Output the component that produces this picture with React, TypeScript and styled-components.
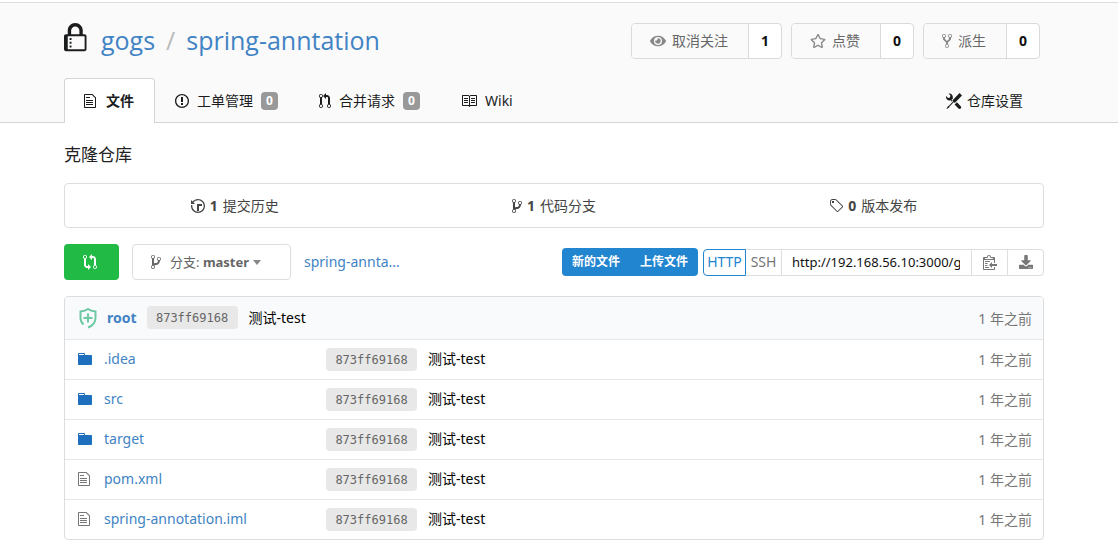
import React from "react";
import styled, { createGlobalStyle, css } from "styled-components";
import { FaEye, FaRegStar, FaDownload } from "react-icons/fa";

const GlobalStyle = createGlobalStyle`
  *, *::before, *::after { box-sizing: border-box; }
  body {
    margin: 0;
    background: #fff;
    color: #000;
    font: 14px/20px "Noto Sans", "Noto Sans CJK SC", sans-serif;
  }
  a { color: #4183c4; text-decoration: none; }
  button, input { font: inherit; margin: 0; }
  button { cursor: pointer; }
`;

const paths = {
  lock: [12, "M4 13H3v-1h1v1zm8-6v7c0 .55-.45 1-1 1H1c-.55 0-1-.45-1-1V7c0-.55.45-1 1-1h1V4c0-2.2 1.8-4 4-4s4 1.8 4 4v2h1c.55 0 1 .45 1 1zM3.8 6h4.41V4c0-1.22-.98-2.2-2.2-2.2-1.22 0-2.2.98-2.2 2.2v2H3.8zM11 7H2v7h9V7zM4 8H3v1h1V8zm0 2H3v1h1v-1z"],
  file: [12, "M6 5H2V4h4v1zM2 8h7V7H2v1zm0 2h7V9H2v1zm0 2h7v-1H2v1zm10-7.5V14c0 .55-.45 1-1 1H1c-.55 0-1-.45-1-1V2c0-.55.45-1 1-1h7.5L12 4.5zM11 5L8 2H1v12h10V5z"],
  issue: [14, "M7 2.3c3.14 0 5.7 2.56 5.7 5.7s-2.56 5.7-5.7 5.7A5.71 5.71 0 0 1 1.3 8c0-3.14 2.56-5.7 5.7-5.7zM7 1C3.14 1 0 4.14 0 8s3.14 7 7 7 7-3.14 7-7-3.14-7-7-7zm1 3H6v5h2V4zm0 6H6v2h2v-2z"],
  pull: [12, "M11 11.28V5c-.03-.78-.34-1.47-.94-2.06C9.46 2.35 8.78 2.03 8 2H7V0L4 3l3 3V4h1c.27.02.48.11.69.31.21.2.3.42.31.69v6.28A1.993 1.993 0 0 0 10 15a1.993 1.993 0 0 0 1-3.72zm-1 2.92c-.66 0-1.2-.55-1.2-1.2 0-.65.55-1.2 1.2-1.2.65 0 1.2.55 1.2 1.2 0 .65-.55 1.2-1.2 1.2zM4 3c0-1.11-.89-2-2-2a1.993 1.993 0 0 0-1 3.72v6.56A1.993 1.993 0 0 0 2 15a1.993 1.993 0 0 0 1-3.72V4.72c.59-.34 1-.98 1-1.72zm-.8 10c0 .66-.55 1.2-1.2 1.2-.65 0-1.2-.55-1.2-1.2 0-.65.55-1.2 1.2-1.2.65 0 1.2.55 1.2 1.2zM2 4.2C1.34 4.2.8 3.65.8 3c0-.65.55-1.2 1.2-1.2.65 0 1.2.55 1.2 1.2 0 .65-.55 1.2-1.2 1.2z"],
  book: [16, "M3 5h4v1H3V5zm0 3h4V7H3v1zm0 2h4V9H3v1zm11-5h-4v1h4V5zm0 2h-4v1h4V7zm0 2h-4v1h4V9zm2-6v9c0 .55-.45 1-1 1H9.5l-1 1-1-1H2c-.55 0-1-.45-1-1V3c0-.55.45-1 1-1h5.5l1 1 1-1H15c.55 0 1 .45 1 1zm-8 .5L7.5 3H2v9h6V3.5zm7-.5H9.5l-.5.5V12h6V3z"],
  tools: [16, "M4.48 7.27c.26.26 1.28 1.33 1.28 1.33l.56-.58-.88-.91 1.69-1.8s-.76-.74-.43-.45c.32-1.19.03-2.51-.87-3.44C4.93.5 3.66.2 2.52.51l1.93 2-.51 1.96-1.89.52-1.93-1.99C-.19 4.17.1 5.48 1 6.4c.94.98 2.29 1.26 3.48.87zm6.44 1.94l-2.33 2.3 3.84 3.98c.31.33.73.49 1.14.49.41 0 .82-.16 1.14-.49.63-.65.63-1.7 0-2.35l-3.79-3.93zM16 2.53L13.55 0 6.33 7.46l.88.91-4.31 4.46-.99.53-1.39 2.27.35.37 2.2-1.44.51-1.02L7.9 9.08l.88.91L16 2.53z"],
  history: [14, "M8 13H6V6h5v2H8v5zM7 1C4.81 1 2.87 2.02 1.59 3.59L0 2v4h4L2.5 4.5C3.55 3.17 5.17 2.3 7 2.3c3.14 0 5.7 2.56 5.7 5.7s-2.56 5.7-5.7 5.7A5.71 5.71 0 0 1 1.3 8c0-.34.03-.67.09-1H.08C.03 7.33 0 7.66 0 8c0 3.86 3.14 7 7 7s7-3.14 7-7-3.14-7-7-7z"],
  branch: [10, "M10 5c0-1.11-.89-2-2-2a1.993 1.993 0 0 0-1 3.72v.3c-.02.52-.23.98-.63 1.38-.4.4-.86.61-1.38.63-.83.02-1.48.16-2 .45V4.72a1.993 1.993 0 0 0-1-3.72C.88 1 0 1.89 0 3a2 2 0 0 0 1 1.72v6.56c-.59.35-1 .99-1 1.72 0 1.11.89 2 2 2 1.11 0 2-.89 2-2 0-.53-.2-1-.53-1.36.09-.06.48-.41.59-.47.25-.11.56-.17.94-.17 1.05-.05 1.95-.45 2.75-1.25S8.95 7.77 9 6.73h-.02C9.59 6.37 10 5.73 10 5zM2 1.8c.66 0 1.2.55 1.2 1.2 0 .65-.55 1.2-1.2 1.2C1.35 4.2.8 3.65.8 3c0-.65.55-1.2 1.2-1.2zm0 12.41c-.66 0-1.2-.55-1.2-1.2 0-.65.55-1.2 1.2-1.2.65 0 1.2.55 1.2 1.2 0 .65-.55 1.2-1.2 1.2zm6-8c-.66 0-1.2-.55-1.2-1.2 0-.65.55-1.2 1.2-1.2.65 0 1.2.55 1.2 1.2 0 .65-.55 1.2-1.2 1.2z"],
  tag: [14, "M7.73 1.73C7.26 1.26 6.62 1 5.96 1H3.5C2.13 1 1 2.13 1 3.5v2.47c0 .66.27 1.3.73 1.77l6.06 6.06c.39.39 1.02.39 1.41 0l4.59-4.59a.996.996 0 0 0 0-1.41L7.73 1.73zM2.38 7.09c-.31-.3-.47-.7-.47-1.13V3.5c0-.88.72-1.59 1.59-1.59h2.47c.42 0 .83.16 1.13.47l6.14 6.13-4.73 4.73-6.13-6.15zM3.01 3h2v2H3V3h.01z"],
  fork: [10, "M8 1a1.993 1.993 0 0 0-1 3.72V6L5 8 3 6V4.72A1.993 1.993 0 0 0 2 1a1.993 1.993 0 0 0-1 3.72V6.5l3 3v1.78A1.993 1.993 0 0 0 5 15a1.993 1.993 0 0 0 1-3.72V9.5l3-3V4.72A1.993 1.993 0 0 0 8 1zM2 4.2C1.34 4.2.8 3.65.8 3c0-.65.55-1.2 1.2-1.2.65 0 1.2.55 1.2 1.2 0 .65-.55 1.2-1.2 1.2zm3 10c-.66 0-1.2-.55-1.2-1.2 0-.65.55-1.2 1.2-1.2.65 0 1.2.55 1.2 1.2 0 .65-.55 1.2-1.2 1.2zm3-10c-.66 0-1.2-.55-1.2-1.2 0-.65.55-1.2 1.2-1.2.65 0 1.2.55 1.2 1.2 0 .65-.55 1.2-1.2 1.2z"],
  compare: [14, "M5 12H4c-.27-.02-.48-.11-.69-.31-.21-.2-.3-.42-.31-.69V4.72A1.993 1.993 0 0 0 2 1a1.993 1.993 0 0 0-1 3.72V11c.03.78.34 1.47.94 2.06.6.59 1.28.91 2.06.94h1v2l3-3-3-3v2zM2 1.8c.66 0 1.2.55 1.2 1.2 0 .65-.55 1.2-1.2 1.2C1.35 4.2.8 3.65.8 3c0-.65.55-1.2 1.2-1.2zm11 9.48V5c-.03-.78-.34-1.47-.94-2.06-.6-.59-1.28-.91-2.06-.94H9V0L6 3l3 3V4h1c.27.02.48.11.69.31.21.2.3.42.31.69v6.28A1.993 1.993 0 0 0 12 15a1.993 1.993 0 0 0 1-3.72zm-1 2.92c-.66 0-1.2-.55-1.2-1.2 0-.65.55-1.2 1.2-1.2.65 0 1.2.55 1.2 1.2 0 .65-.55 1.2-1.2 1.2z"],
  folder: [14, "M13 4H7V3c0-.66-.31-1-1-1H1c-.55 0-1 .45-1 1v10c0 .55.45 1 1 1h12c.55 0 1-.45 1-1V5c0-.55-.45-1-1-1zM6 4H1V3h5v1z"],
  clippy: [14, "M2 13h4v1H2v-1zm5-6H2v1h5V7zm2 3V8l-3 3 3 3v-2h5v-2H9zM4.5 9H2v1h2.5V9zM2 12h2.5v-1H2v1zm9 1h1v2c-.02.28-.11.52-.3.7-.19.18-.42.28-.7.3H1c-.55 0-1-.45-1-1V4c0-.55.45-1 1-1h3c0-1.11.89-2 2-2 1.11 0 2 .89 2 2h3c.55 0 1 .45 1 1v5h-1V6H1v9h10v-2zM2 5h8c0-.55-.45-1-1-1H8c-.55 0-1-.45-1-1s-.45-1-1-1-1 .45-1 1-.45 1-1 1H3c-.55 0-1 .45-1 1z"],
} as const;

type IconName = keyof typeof paths;

const Svg = styled.svg`
  display: block;
  flex: none;
  fill: currentColor;
`;

function Icon({ name, size = 16 }: { name: IconName; size?: number }) {
  const [w, d] = paths[name];
  return (
    <Svg viewBox={`0 0 ${w} 16`} width={(w * size) / 16} height={size} aria-hidden="true">
      <path d={d} />
    </Svg>
  );
}

const Header = styled.header`
  margin-top: 2px;
  padding: 0 74px 0 64px;
  background: #fafafa;
  border-top: 1px solid #ddd;
  border-bottom: 1px solid #d4d4d5;
`;

const TitleRow = styled.div`
  display: flex;
  align-items: flex-start;
  justify-content: space-between;
  height: 75px;
  padding: 20px 4px 0 0;
`;

const RepoTitle = styled.h1`
  display: flex;
  align-items: center;
  margin: 0;
  font-family: "Open Sans", "Noto Sans CJK SC", sans-serif;
  font-size: 25px;
  line-height: 34px;
  font-weight: 400;
`;

const LockSlot = styled.span`
  width: 37px;
  color: #1b1c1d;
  padding-bottom: 4px;
`;

const Divider = styled.span`
  margin: 0 11px;
  color: #bbb;
`;

const Actions = styled.div`
  display: flex;
  gap: 9px;
`;

const ActionGroup = styled.div`
  display: flex;
  height: 36px;
  border: 1px solid #d9dadb;
  border-radius: 4px;
  overflow: hidden;
  background: #fff;
`;

const ActionButton = styled.button`
  display: flex;
  align-items: center;
  gap: 6px;
  padding: 0 20px 0 18px;
  border: 0;
  border-right: 1px solid #d9dadb;
  background: #fafafa;
  color: #666;

  svg { color: #888; }
`;

const ActionCount = styled.a`
  display: flex;
  align-items: center;
  justify-content: center;
  width: 32px;
  color: #111;
  font-weight: 700;
`;

const Tabs = styled.nav`
  display: flex;
  align-items: flex-end;
  margin-bottom: -1px;
`;

const Tab = styled.a<{ $active?: boolean; $end?: boolean }>`
  display: flex;
  align-items: center;
  gap: 8px;
  height: 45px;
  padding: 0 20px 0 19px;
  border: 1px solid transparent;
  border-bottom: 0;
  color: #1b1c1d;
  ${(p) =>
    p.$active &&
    css`
      gap: 10px;
      border-color: #d4d4d5;
      border-radius: 4px 4px 0 0;
      background: #fff;
      font-weight: 700;
    `}
  ${(p) =>
    p.$end &&
    css`
      gap: 5px;
      margin-left: auto;
    `}
`;

const Badge = styled.span`
  width: 17px;
  border-radius: 4px;
  background: #999;
  color: #fff;
  font-size: 12px;
  line-height: 18px;
  font-weight: 700;
  text-align: center;
`;

const Main = styled.main`
  padding: 20px 74px 15px 64px;
`;

const Description = styled.p`
  margin: 0 0 16px;
  font-size: 17px;
  line-height: 24px;
  color: #222;
`;

const Stats = styled.div`
  display: grid;
  grid-template-columns: repeat(3, 1fr);
  height: 45px;
  padding: 0 10px;
  border: 1px solid #dededf;
  border-radius: 4px;
`;

const Stat = styled.a`
  display: flex;
  align-items: center;
  justify-content: center;
  gap: 5px;
  color: #444;
`;

const Toolbar = styled.div`
  display: flex;
  align-items: center;
  height: 36px;
  margin: 16px 0;
`;

const CompareButton = styled.button`
  display: flex;
  align-items: center;
  width: 55px;
  height: 36px;
  margin-right: 13px;
  padding: 0 19px;
  border: 0;
  border-radius: 4px;
  background: #21ba45;
  color: #fff;
`;

const BranchButton = styled.button`
  display: flex;
  align-items: center;
  height: 36px;
  width: 159px;
  margin-right: 13px;
  padding: 0 18px;
  border: 1px solid #dededf;
  border-radius: 4px;
  background: #fff;
  color: #666;
  font-size: 13px;
  white-space: pre;
`;

const BranchLabel = styled.span`
  margin-left: 9px;
`;

const Caret = styled.span`
  margin-left: 4px;
  border: 4px solid transparent;
  border-top: 5px solid #888;
  border-bottom: 0;
`;

const FileButtons = styled.div`
  display: flex;
  margin: 0 5px 0 auto;
  border-radius: 4px;
  overflow: hidden;
`;

const FileButton = styled.button`
  width: 68px;
  height: 28px;
  padding: 0;
  border: 0;
  background: #2185d0;
  color: #fff;
  font-size: 12px;
  font-weight: 700;
`;

const ClonePanel = styled.div`
  display: flex;
  height: 27px;
`;

const CloneButton = styled.button<{ $width: number; $active?: boolean; $last?: boolean }>`
  display: flex;
  align-items: center;
  justify-content: center;
  width: ${(p) => p.$width}px;
  padding: 0;
  border: 1px solid #dededf;
  border-left-width: 0;
  border-radius: ${(p) => (p.$last ? "0 4px 4px 0" : "0")};
  background: #fff;
  color: #777;
  ${(p) =>
    p.$active &&
    css`
      border: 1px solid #2185d0;
      border-radius: 4px 0 0 4px;
      color: #2185d0;
    `}
`;

const CloneUrl = styled.input`
  width: 190px;
  padding: 0 11px 0 10px;
  border: 1px solid #dededf;
  border-left-width: 0;
  border-radius: 0;
  outline: 0;
  background: #fff;
  color: #111;
  font-size: 13px;
`;

const Frame = styled.div`
  border: 1px solid #dcddde;
  border-radius: 4px;
  overflow: hidden;
`;

const FileTable = styled.table`
  width: 100%;
  border-collapse: collapse;
  table-layout: fixed;

  th, td {
    height: 40px;
    padding: 0 11px 0 0;
    text-align: left;
    font-weight: 400;
    white-space: nowrap;
  }
  tbody tr { border-top: 1px solid #e6e7e8; }
  thead th {
    height: 42px;
    background: #f9fafb;
  }
`;

const NameCol = styled.col`
  width: 261px;
`;

const AgeCol = styled.col`
  width: 120px;
`;

const Cell = styled.div<{ $indent?: boolean }>`
  display: flex;
  align-items: center;
  padding-left: ${(p) => (p.$indent ? "13px" : "0")};
`;

const Age = styled.div`
  padding-top: 2px;
  color: #777;
  text-align: right;
`;

const IconSlot = styled.span<{ $folder?: boolean }>`
  width: 26px;
  color: ${(p) => (p.$folder ? "#1e70bf" : "#767676")};
`;

const Avatar = styled.svg`
  width: 20px;
  height: 22px;
  margin-right: 9px;
`;

const Author = styled.a`
  margin-right: 10px;
  font-weight: 700;
`;

const Sha = styled.a`
  width: 91px;
  height: 23px;
  margin-right: 11px;
  border-radius: 4px;
  background: #e8e8e8;
  color: #666;
  font: 12px/25px "DejaVu Sans Mono", monospace;
  text-align: center;
`;

const files: { name: string; folder: boolean }[] = [
  { name: ".idea", folder: true },
  { name: "src", folder: true },
  { name: "target", folder: true },
  { name: "pom.xml", folder: false },
  { name: "spring-annotation.iml", folder: false },
];

function Action({ icon, label, count }: { icon: React.ReactNode; label: string; count: number }) {
  return (
    <ActionGroup>
      <ActionButton type="button">
        {icon}
        {label}
      </ActionButton>
      <ActionCount href="#">{count}</ActionCount>
    </ActionGroup>
  );
}

export default function App() {
  return (
    <>
      <GlobalStyle />
      <Header>
        <TitleRow>
          <RepoTitle>
            <LockSlot>
              <Icon name="lock" size={30} />
            </LockSlot>
            <a href="#">gogs</a>
            <Divider>/</Divider>
            <a href="#">spring-anntation</a>
          </RepoTitle>
          <Actions>
            <Action icon={<FaEye size={16} />} label="取消关注" count={1} />
            <Action icon={<FaRegStar size={16} />} label="点赞" count={0} />
            <Action icon={<Icon name="fork" />} label="派生" count={0} />
          </Actions>
        </TitleRow>
        <Tabs>
          <Tab href="#" $active>
            <Icon name="file" />
            文件
          </Tab>
          <Tab href="#">
            <Icon name="issue" />
            工单管理
            <Badge>0</Badge>
          </Tab>
          <Tab href="#">
            <Icon name="pull" />
            合并请求
            <Badge>0</Badge>
          </Tab>
          <Tab href="#">
            <Icon name="book" />
            Wiki
          </Tab>
          <Tab href="#" $end>
            <Icon name="tools" />
            仓库设置
          </Tab>
        </Tabs>
      </Header>

      <Main>
        <Description>克隆仓库</Description>
        <Stats>
          <Stat href="#">
            <Icon name="history" />
            <b>1</b>
            <span>提交历史</span>
          </Stat>
          <Stat href="#">
            <Icon name="branch" />
            <b>1</b>
            <span>代码分支</span>
          </Stat>
          <Stat href="#">
            <Icon name="tag" />
            <b>0</b>
            <span>版本发布</span>
          </Stat>
        </Stats>

        <Toolbar>
          <CompareButton type="button" aria-label="Compare">
            <Icon name="compare" />
          </CompareButton>
          <BranchButton type="button" aria-haspopup="listbox">
            <Icon name="branch" />
            <BranchLabel>
              分支: <b>master</b>
            </BranchLabel>
            <Caret />
          </BranchButton>
          <a href="#">spring-annta...</a>
          <FileButtons>
            <FileButton type="button">新的文件</FileButton>
            <FileButton type="button">上传文件</FileButton>
          </FileButtons>
          <ClonePanel>
            <CloneButton type="button" $width={43} $active>
              HTTP
            </CloneButton>
            <CloneButton type="button" $width={36}>
              SSH
            </CloneButton>
            <CloneUrl
              aria-label="Clone URL"
              readOnly
              value="http://192.168.56.10:3000/gogs/spring-anntation.git"
            />
            <CloneButton type="button" $width={36} aria-label="Copy">
              <Icon name="clippy" />
            </CloneButton>
            <CloneButton type="button" $width={36} $last aria-label="Download">
              <FaDownload size={14} />
            </CloneButton>
          </ClonePanel>
        </Toolbar>

        <Frame>
          <FileTable>
            <colgroup>
              <NameCol />
              <col />
              <AgeCol />
            </colgroup>
            <thead>
              <tr>
                <th colSpan={2}>
                  <Cell $indent>
                    <Avatar viewBox="0 0 20 22" fill="none" stroke="#6cc9a1" strokeWidth="2" aria-hidden="true">
                      <path d="M5.500 17.500C3.500 15.800 2.500 13.500 2.500 11V4.500C5.500 4.200 8 3.500 10 2c2 1.500 4.500 2.200 7.500 2.500V11c0 4.500-3 7.800-7.500 9.500" />
                      <path d="M10 6.500v9M5.500 11h9" />
                    </Avatar>
                    <Author href="#">root</Author>
                    <Sha href="#">873ff69168</Sha>
                    测试-test
                  </Cell>
                </th>
                <th>
                  <Age>1 年之前</Age>
                </th>
              </tr>
            </thead>
            <tbody>
              {files.map((f) => (
                <tr key={f.name}>
                  <td>
                    <Cell $indent>
                      <IconSlot $folder={f.folder}>
                        <Icon name={f.folder ? "folder" : "file"} />
                      </IconSlot>
                      <a href="#">{f.name}</a>
                    </Cell>
                  </td>
                  <td>
                    <Cell>
                      <Sha href="#">873ff69168</Sha>
                      测试-test
                    </Cell>
                  </td>
                  <td>
                    <Age>1 年之前</Age>
                  </td>
                </tr>
              ))}
            </tbody>
          </FileTable>
        </Frame>
      </Main>
    </>
  );
}
